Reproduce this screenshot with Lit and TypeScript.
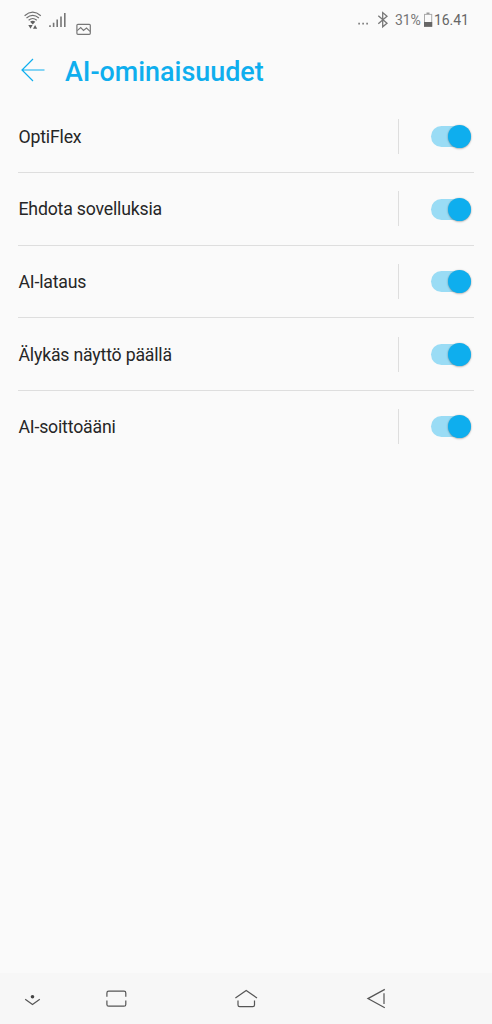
import { LitElement, html, css, svg } from "lit";
import { customElement, property, state } from "lit/decorators.js";

@customElement("status-bar")
class StatusBar extends LitElement {
  static styles = css`
    :host { display: block; }
    .bar { display: flex; justify-content: space-between; height: 40px; color: #757575; font-size: 14px; line-height: 40px; }
    svg { display: block; flex: none; }
    .info { display: flex; padding-right: 24px; }
    .pct { width: 29px; margin-left: 5px; white-space: nowrap; letter-spacing: -0.1px; }
    .time { width: 34px; white-space: nowrap; color: #666; letter-spacing: -0.1px; }
  `;
  render() {
    return html`<div class="bar">
      <svg width="100" height="40" viewBox="0 0 100 40" fill="none" stroke="#707070" stroke-width="1.2">
        <path d="M24.6 15.7Q32.7 8.6 40.8 15.7M26.5 18Q32.7 12.7 38.9 18M28.6 20.2Q32.7 16.8 36.8 20.2"/>
        <path stroke="none" fill="#606060" d="M30.1 21.7Q32.7 19.9 35.3 21.7L32.7 24.4zM28.3 25H32.6L30.5 28.7zM33 28.7H37.2L35.1 25z"/>
        <path stroke="#777" stroke-width="1.6" d="M50 27V25.2M53.6 27V22.7M57.2 27V19.6M61 27V16.5M64.8 27V13"/>
        <rect x="76.9" y="24.3" width="13.4" height="10" rx="1" stroke="#777"/>
        <path stroke="#777" stroke-width="1.1" d="M77.2 30.6L80.7 27.5L83.5 30.4L86.5 28L90 31.3"/>
      </svg>
      <div class="info">
        <svg width="34" height="40" viewBox="356 0 34 40" fill="none" stroke="#777" stroke-width="1.3">
          <path stroke="none" fill="#777" d="M358.3 22.8h1.6v1.6h-1.6zM362.3 22.8h1.6v1.6h-1.6zM366.3 22.8h1.6v1.6h-1.6z"/>
          <path d="M378.3 15.8L387 23.2L382.7 26.8V12.6L387 16.2L378.3 23.8"/>
        </svg>
        <span class="pct">31%</span>
        <svg width="10" height="40" viewBox="424 0 10 40">
          <rect x="426.5" y="12.5" width="3" height="1.5" fill="#999"/>
          <rect x="424.5" y="14.4" width="7.2" height="11.8" fill="none" stroke="#aaa"/>
          <rect x="424" y="22" width="8.2" height="4.8" fill="#666"/>
        </svg>
        <span class="time">16.41</span>
      </div>
    </div>`;
  }
}

@customElement("toggle-switch")
class ToggleSwitch extends LitElement {
  @property({ type: Boolean }) on = false;
  static styles = css`
    :host { display: block; }
    .track { display: flex; align-items: center; width: 40.5px; height: 21px; border-radius: 11px; background: #ccc; }
    .track.on { background: #9adcf5; justify-content: flex-end; }
    .thumb { width: 23px; height: 23px; flex: none; border-radius: 50%; background: #fff; box-shadow: 0 0.5px 2px rgba(0, 0, 0, 0.4); }
    .on .thumb { background: #0eaeee; }
  `;
  render() {
    return html`<div class="track ${this.on ? "on" : ""}"><div class="thumb"></div></div>`;
  }
}

@customElement("nav-bar")
class NavBar extends LitElement {
  static styles = css`
    :host { display: block; }
    .bar { height: 51px; background: #f7f7f7; }
    svg { display: block; }
  `;
  render() {
    return html`<div class="bar">
      <svg width="492" height="51" viewBox="0 973 492 51" fill="none" stroke="#555" stroke-width="1.2">
        ${svg`<circle cx="32.5" cy="996.7" r="1.8" fill="#444" stroke="none"/>
        <path d="M25.2 999.2L32.5 1004.4L39.8 999.2"/>
        <path d="M106.9 996.8V993Q106.9 991.2 108.7 991.2H124Q125.8 991.2 125.8 993V996.8M106.9 1000.6V1004.4Q106.9 1006.2 108.7 1006.2H124Q125.8 1006.2 125.8 1004.4V1000.6"/>
        <path d="M235.4 998L246.2 990.6L257 998M238 1000.5V1005Q238 1006.7 239.7 1006.7H252.8Q254.5 1006.7 254.5 1005V1000.5"/>
        <path d="M384.8 989.4L367.9 998.6L384.8 1007.8M384 993.2V1004"/>`}
      </svg>
    </div>`;
  }
}

@customElement("app-root")
class AppRoot extends LitElement {
  @state() private items = [
    { label: "OptiFlex", on: true },
    { label: "Ehdota sovelluksia", on: true },
    { label: "AI-lataus", on: true },
    { label: "Älykäs näyttö päällä", on: true },
    { label: "AI-soittoääni", on: true },
  ];
  static styles = css`
    :host { display: flex; flex-direction: column; height: 1024px; background: #fafafa; font-family: Roboto, sans-serif; }
    .header { display: flex; align-items: center; height: 60.5px; padding-left: 21px; }
    .back { display: block; width: 24px; height: 24px; margin-right: 20px; }
    h1 { margin: 3px 0 0; font-size: 26.9px; line-height: 32px; font-weight: 500; color: #0eaeee; white-space: nowrap; }
    .list { flex: 1; padding: 0 18px; }
    .row { display: flex; align-items: center; box-sizing: border-box; height: 72.6px; border-bottom: 1px solid #dedede; padding-right: 2.6px; }
    .row:last-child { border-bottom-color: transparent; }
    .label { flex: 1; padding: 1px 0 0 0.5px; font-size: 17.7px; letter-spacing: -0.19px; line-height: 24px; color: #262626; }
    .divider { width: 1px; height: 35px; background: #dedede; margin-right: 32px; }
    toggle-switch { padding-top: 0.4px; }
  `;
  render() {
    return html`
      <status-bar></status-bar>
      <div class="header">
        <svg class="back" viewBox="0 0 24 24" fill="none" stroke="#0eaeee" stroke-width="1.2"><path d="M12 1L1 12L12 23M1 12H23.5"/></svg>
        <h1>AI-ominaisuudet</h1>
      </div>
      <div class="list">
        ${this.items.map((i) => html`<div class="row">
          <span class="label">${i.label}</span>
          <div class="divider"></div>
          <toggle-switch .on=${i.on}></toggle-switch>
        </div>`)}
      </div>
      <nav-bar></nav-bar>`;
  }
}
